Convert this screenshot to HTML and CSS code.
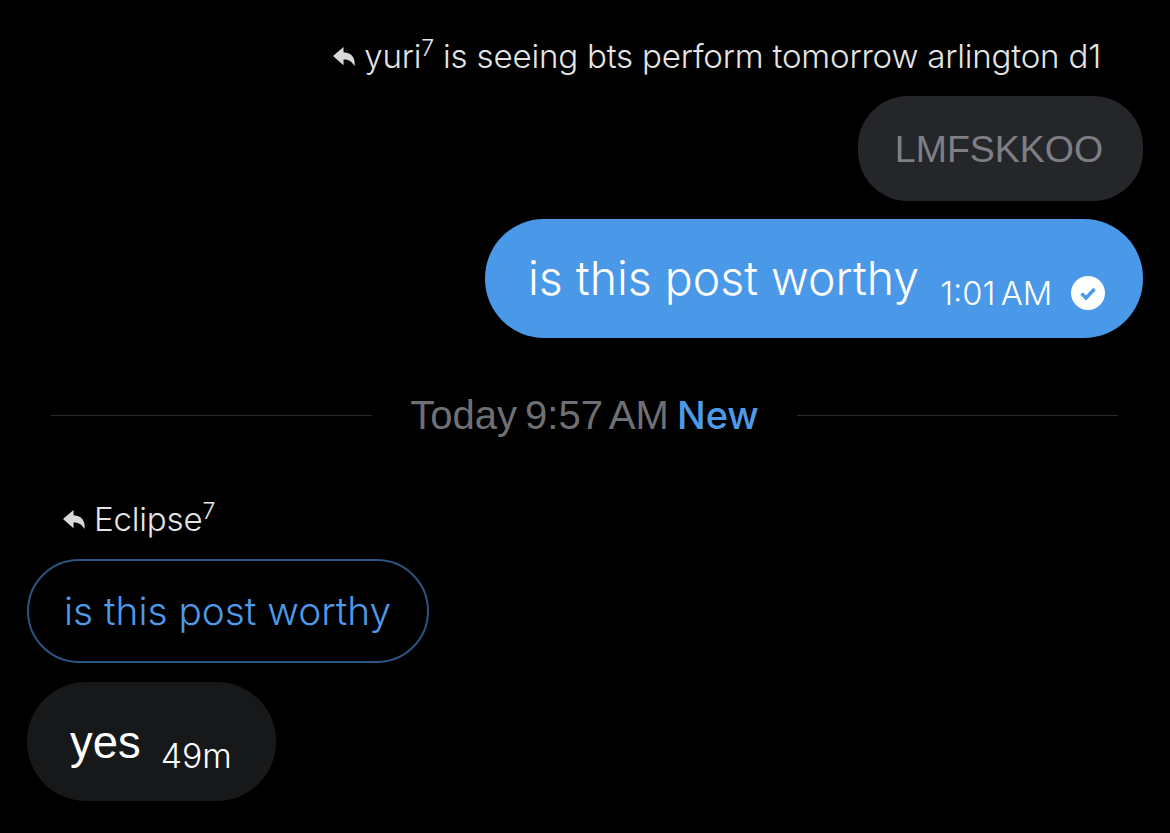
FILE: index.html
```html
<!DOCTYPE html>
<html lang="en">
<head>
  <meta charset="UTF-8" />
  <title>Messages</title>
  <link rel="stylesheet" href="styles.css">
</head>
<body>
  <main class="thread">
    <section class="group group-sent">
      <div class="reply-label reply-label-sent">
        <svg class="reply-icon" viewBox="0 0 24 24"><path d="M11 2 0 11.500 11 21v-6c5 0 8.500 1.500 11.500 7 1-8-2.500-14-11.500-14.500z" /></svg>
        <span>yuri<sup>7</sup> is seeing bts perform tomorrow arlington d1</span>
      </div>
      <div class="bubble bubble-quoted">LMFSKKOO</div>
      <div class="bubble bubble-blue">
        <span class="body">is this post worthy</span>
        <span class="time">1:01 AM</span>
        <svg class="seen" viewBox="0 0 34 34"><circle cx="17" cy="17" r="17" fill="#fff" /><path d="M10.500 17.500 15 22l8.500-9" fill="none" stroke="#4a98e8" stroke-width="3.400" /></svg>
      </div>
    </section>

    <div class="divider">
      <span class="divider-text">Today 9:57 AM <b>New</b></span>
    </div>

    <section class="group group-received">
      <div class="reply-label reply-label-received">
        <svg class="reply-icon" viewBox="0 0 24 24"><path d="M11 2 0 11.500 11 21v-6c5 0 8.500 1.500 11.500 7 1-8-2.500-14-11.500-14.500z" /></svg>
        <span>Eclipse<sup>7</sup></span>
      </div>
      <div class="bubble bubble-outline">is this post worthy</div>
      <div class="bubble bubble-dark">
        <span class="body body-plain">yes</span>
        <span class="time">49m</span>
      </div>
    </section>
  </main>
</body>
</html>
```

FILE: styles.css
```css
html, body {
  margin: 0;
  height: 100%;
  background-color: #000;
}

body {
  font-family: Inter, "Liberation Sans", sans-serif;
  color: #fff;
  overflow: hidden;
}

.thread {
  display: flex;
  flex-direction: column;
  padding: 37px 27px 0;
}

.group {
  display: flex;
  flex-direction: column;
}

.group-sent {
  align-items: flex-end;
}

.group-received {
  align-items: flex-start;
}

.reply-label {
  display: flex;
  align-items: center;
  gap: 8px;
  height: 38px;
  font-size: 33.100px;
  font-weight: 300;
  letter-spacing: -0.2px;
  color: #e4e4e4;
}

.reply-label sup {
  font-size: 23px;
  line-height: 0;
}

.reply-label-sent {
  margin-right: 42px;
  margin-bottom: 21px;
}

.reply-label-received {
  margin-left: 36px;
  margin-bottom: 21px;
}

.reply-icon {
  width: 23px;
  height: 23px;
  fill: #d9d9d9;
}

.bubble {
  display: flex;
  align-items: center;
  box-sizing: border-box;
  white-space: nowrap;
}

.bubble-quoted {
  width: 285px;
  height: 105px;
  padding: 2px 3px 0 0;
  justify-content: center;
  border-radius: 50px;
  background-color: #25262a;
  color: #7d7f85;
  font-family: "Liberation Sans", sans-serif;
  font-size: 37.500px;
  margin-bottom: 18px;
}

.bubble-blue {
  width: 658px;
  height: 119px;
  padding-left: 43px;
  border-radius: 59px;
  background-color: #4a98e8;
}

.body {
  font-size: 46.400px;
  font-weight: 300;
  margin-bottom: 1px;
}

.body-plain {
  font-family: "Liberation Sans", sans-serif;
  font-size: 45.400px;
  font-weight: 400;
  margin-bottom: 0;
  margin-top: 2px;
}

.time {
  font-size: 32.800px;
  font-weight: 300;
  word-spacing: -4px;
  margin-top: 28px;
}

.bubble-blue .time {
  margin-left: 21px;
}

.seen {
  width: 34px;
  height: 34px;
  margin-left: 19px;
  margin-top: 28px;
}

.divider {
  display: flex;
  align-items: center;
  gap: 38px;
  margin: 58px 25px 66px 24px;
  height: 38px;
}

.divider::before,
.divider::after {
  content: "";
  flex: 1;
  height: 1px;
  background-color: #2a2a2c;
}

.divider-text {
  font-family: "Liberation Sans", sans-serif;
  font-size: 40px;
  color: #6f7074;
  white-space: nowrap;
  word-spacing: -3px;
}

.divider-text b {
  font-family: Inter, sans-serif;
  font-size: 38px;
  font-weight: 500;
  color: #4e9ae8;
}

.bubble-outline {
  width: 402px;
  height: 104px;
  padding: 0 0 2px 35px;
  border: 2px solid #2c5480;
  border-radius: 52px;
  color: #4e9ae8;
  font-size: 38.800px;
  font-weight: 300;
  margin-bottom: 19px;
}

.bubble-dark {
  width: 249px;
  height: 119px;
  padding-left: 43px;
  border-radius: 59px;
  background-color: #17181a;
}

.bubble-dark .time {
  font-size: 33.800px;
  margin-left: 20px;
}
```
